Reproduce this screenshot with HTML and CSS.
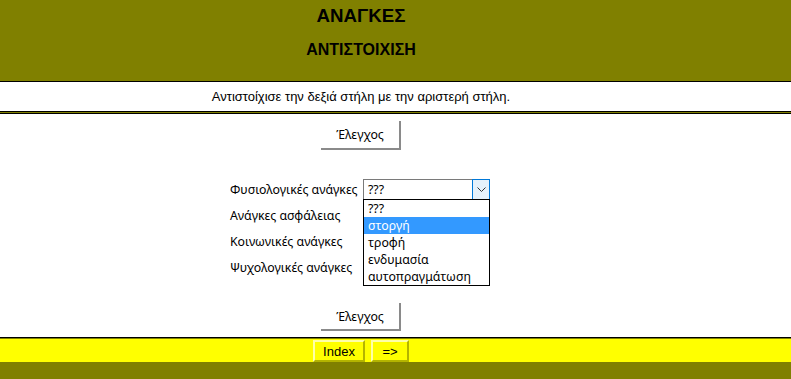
FILE: index.html
```html
<!DOCTYPE html>
<html lang="el">

<head>
    <meta charset="UTF-8">
    <title>ΑΝΑΓΚΕΣ - ΑΝΤΙΣΤΟΙΧΙΣΗ</title>
    <link rel="stylesheet" href="styles.css">
</head>

<body>

    <header class="banner">
        <div class="col">
            <h1 class="title">ΑΝΑΓΚΕΣ</h1>
            <h2 class="subtitle">ΑΝΤΙΣΤΟΙΧΙΣΗ</h2>
        </div>
    </header>

    <div class="intro">
        <p class="col">Αντιστοίχισε την δεξιά στήλη με την αριστερή στήλη.</p>
    </div>

    <div class="rule"></div>

    <main class="quiz">
        <div class="col stack">
            <button class="check" type="button">Έλεγχος</button>

            <div class="pairs">
                <span class="need">Φυσιολογικές ανάγκες</span>
                <div class="pick open">
                    <div class="box">
                        <span class="value">???</span>
                        <span class="arrow">
                            <svg width="9" height="6" viewBox="0 0 9 6">
                                <path d="M0.5 0.5 L4.5 4.5 L8.5 0.5" fill="none" stroke="#333" stroke-width="1"/>
                            </svg>
                        </span>
                    </div>
                    <ul class="menu">
                        <li>???</li>
                        <li class="hover">στοργή</li>
                        <li>τροφή</li>
                        <li>ενδυμασία</li>
                        <li>αυτοπραγμάτωση</li>
                    </ul>
                </div>

                <!-- these three selects sit under the open list -->
                <span class="need">Ανάγκες ασφάλειας</span>
                <div class="pick"><div class="box"></div></div>

                <span class="need">Κοινωνικές ανάγκες</span>
                <div class="pick"><div class="box"></div></div>

                <span class="need">Ψυχολογικές ανάγκες</span>
                <div class="pick"><div class="box"></div></div>
            </div>

            <button class="check check-bottom" type="button">Έλεγχος</button>
        </div>
    </main>

    <footer class="foot">
        <div class="navbar">
            <nav class="col nav">
                <button class="navbtn" type="button">Index</button>
                <button class="navbtn" type="button">=&gt;</button>
            </nav>
        </div>
    </footer>

</body>

</html>
```

FILE: styles.css
```css
html {
    background: #808000;
}

body {
    margin: 0;
    font-family: "Liberation Sans", Arial, sans-serif;
    color: #000;
}

.col {
    width: 722px;
    text-align: center;
}

.banner {
    height: 82px;
    padding-top: 5px;
    box-sizing: border-box;
    background: #808000;
    border-bottom: 1px solid #000;
}

.title {
    margin: 0;
    font-size: 18.72px;
    line-height: 21px;
}

.subtitle {
    margin: 14px 0 0;
    font-size: 16px;
    line-height: 20px;
}

.intro {
    background: #fff;
    height: 29px;
}

.intro p {
    margin: 0;
    font-size: 13px;
    line-height: 29px;
}

.rule {
    height: 1px;
    background: #808000;
    border-top: 1px solid #000;
    border-bottom: 1px solid #000;
}

.quiz {
    background: #fff;
    padding: 7px 0 6px;
}

.stack {
    display: flex;
    flex-direction: column;
    align-items: center;
}

.check {
    width: 80px;
    height: 29px;
    padding: 0;
    background: #fff;
    border: none;
    border-right: 2px solid #8a8a8a;
    border-bottom: 2px solid #8a8a8a;
    font-family: "Noto Sans", "Open Sans", sans-serif;
    font-size: 12.3px;
    color: #000;
}

.check-bottom {
    height: 28px;
    margin-top: 25px;
}

.pairs {
    display: grid;
    grid-template-columns: 128px 127px;
    grid-auto-rows: 21px;
    column-gap: 5px;
    row-gap: 5px;
    margin-top: 29px;
    margin-left: -2px;
    text-align: left;
    font-family: "Noto Sans", "Open Sans", sans-serif;
    font-size: 12.3px;
}

.need {
    line-height: 21px;
    white-space: nowrap;
}

.pick {
    position: relative;
}

.box {
    display: flex;
    height: 21px;
    box-sizing: border-box;
    border: 1px solid #7a7a7a;
    background: #fff;
    line-height: 19px;
}

.value {
    flex: 1;
    padding-left: 4px;
}

.arrow {
    display: flex;
    align-items: center;
    justify-content: center;
    margin: -1px -1px -1px 0;
    width: 16px;
    background: #e5f1fb;
    border: 1px solid #0078d7;
}

.menu {
    position: absolute;
    top: 20px;
    left: 0;
    right: 0;
    z-index: 2;
    margin: 0;
    padding: 0;
    list-style: none;
    background: #fff;
    border: 1px solid #000;
}

.menu li {
    height: 17px;
    line-height: 17px;
    padding-left: 4px;
}

.menu .hover {
    background: #3399ff;
    color: #fff;
}

.foot {
    border-top: 1px solid #000;
    padding-top: 1px;
}

.navbar {
    background: #ffff00;
    height: 23px;
}

.nav {
    display: flex;
    justify-content: center;
    gap: 6px;
    padding-top: 1px;
}

.navbtn {
    height: 22px;
    padding: 0;
    background: #ffff00;
    border: 2px solid;
    border-color: #ffffa8 #b4b400 #b4b400 #ffffa8;
    font-family: "Liberation Sans", Arial, sans-serif;
    font-size: 13px;
    color: #000;
}

.navbtn:first-child {
    width: 52px;
}

.navbtn:last-child {
    width: 38px;
}
```
